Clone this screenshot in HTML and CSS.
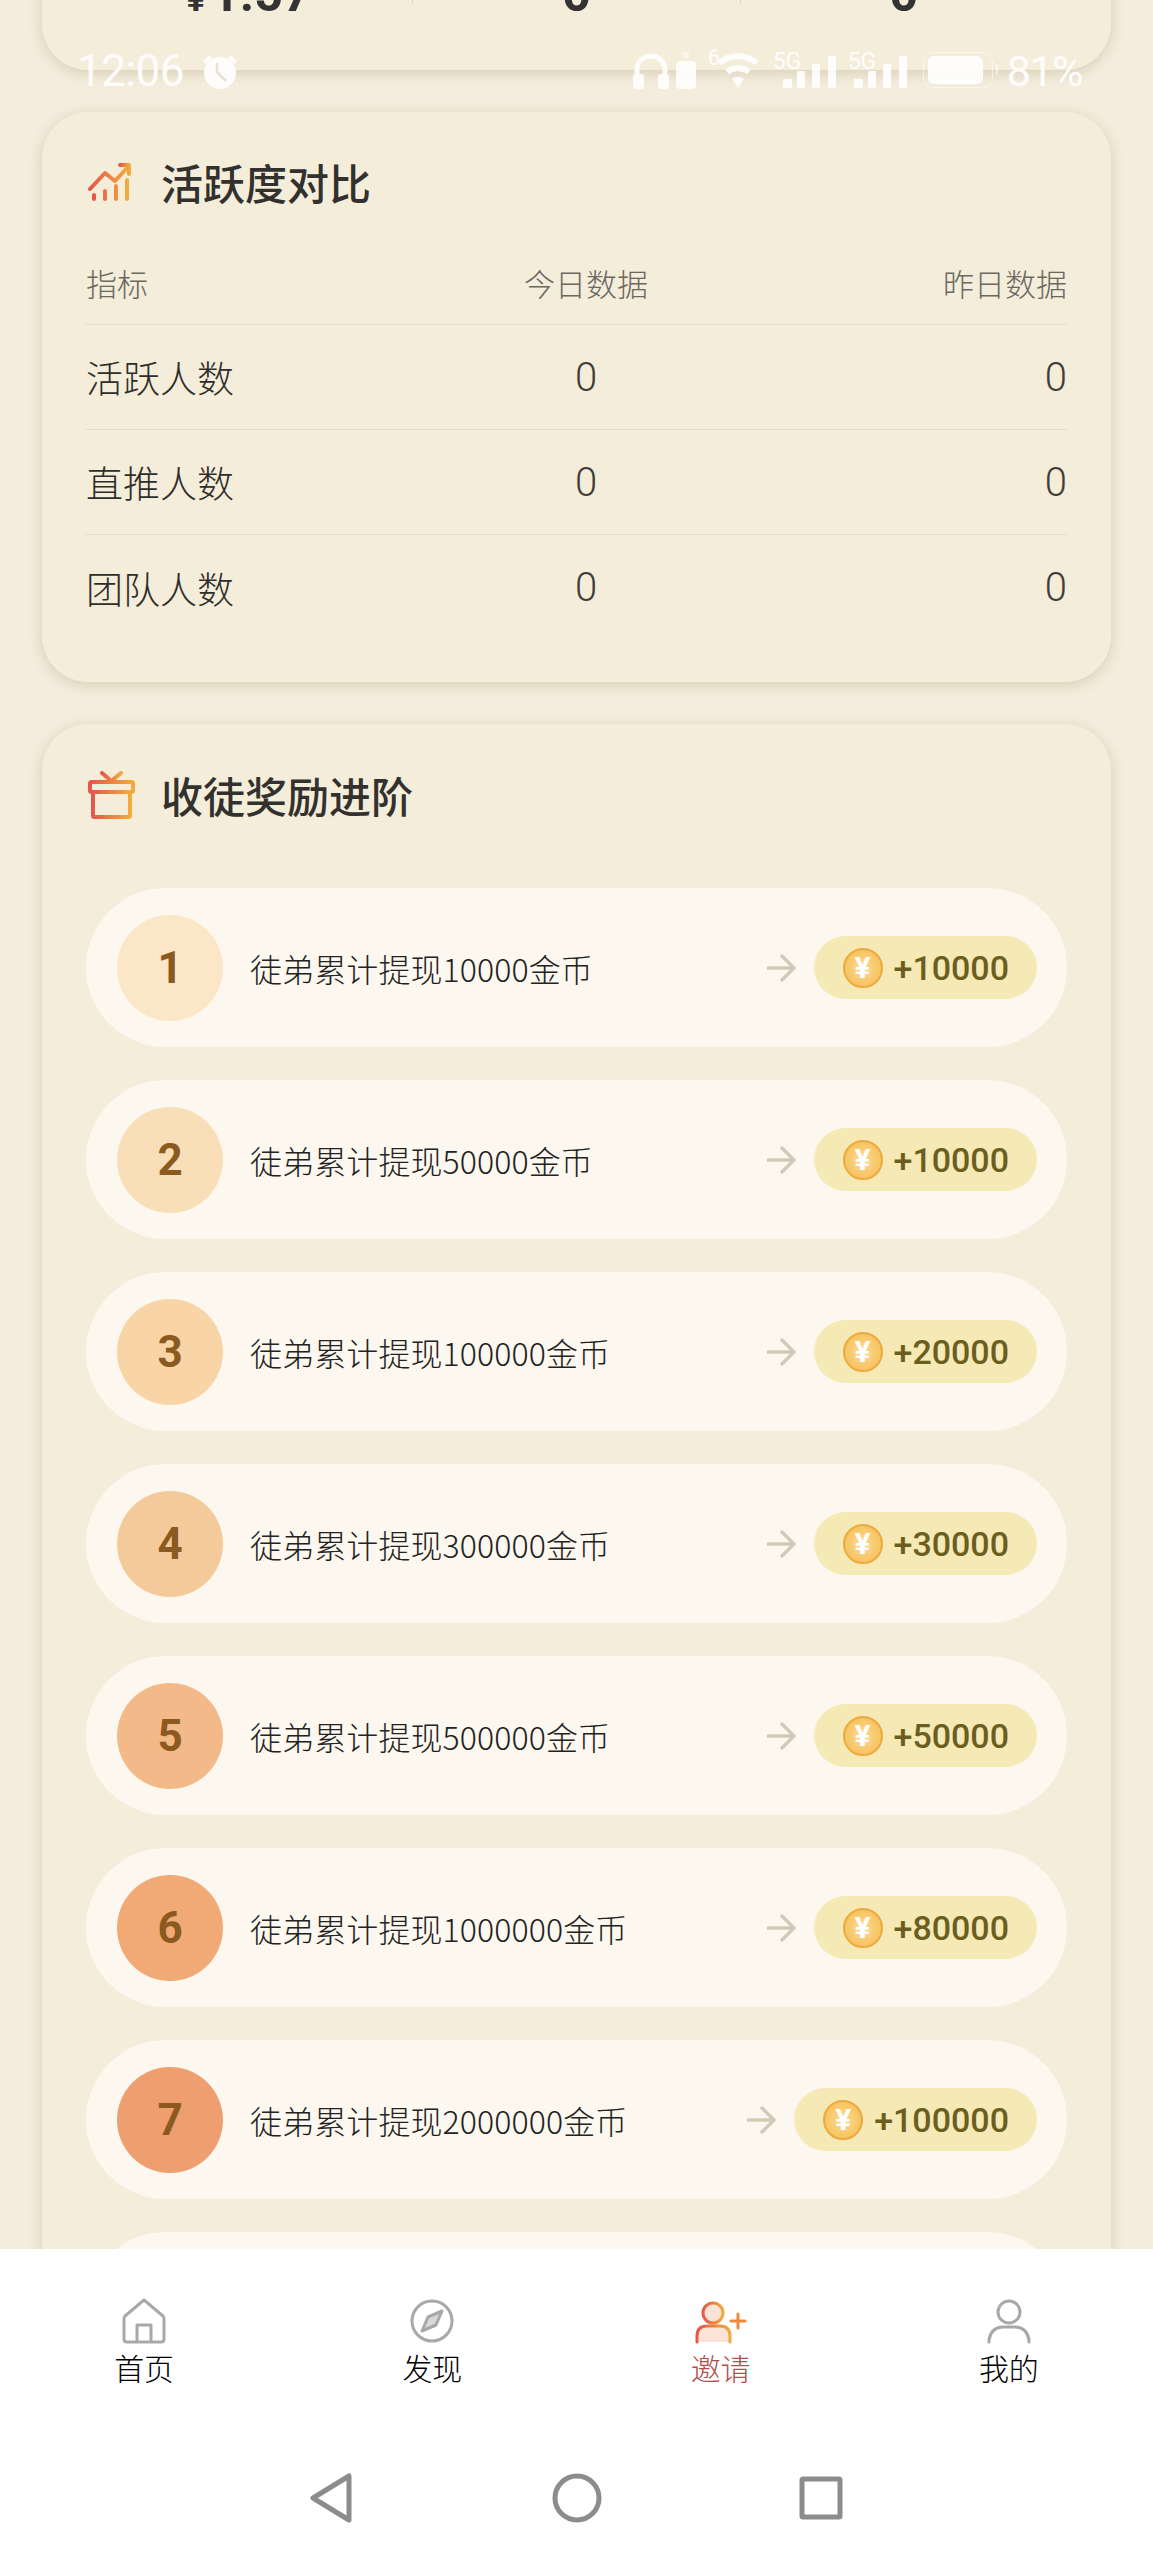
FILE: index.html
```html
<!DOCTYPE html>
<html lang="zh-CN">
<head>
    <meta charset="UTF-8">
    <meta name="viewport" content="width=device-width, initial-scale=1.0">
    <title>邀请</title>
    <link rel="stylesheet" href="styles.css">
</head>
<body>

    <svg class="defs" width="0" height="0">
        <defs>
            <linearGradient id="warm" x1="0" y1="0" x2="1" y2="0">
                <stop offset="0" stop-color="#e6574a"/>
                <stop offset="1" stop-color="#f2ab3c"/>
            </linearGradient>
            <symbol id="bars" viewBox="0 0 53 32">
                <rect x="0" y="23" width="9" height="9" rx="1"/>
                <rect x="14" y="15" width="8" height="17" rx="1"/>
                <rect x="29" y="8" width="8" height="24" rx="1"/>
                <rect x="45" y="0" width="8" height="32" rx="1"/>
            </symbol>
        </defs>
    </svg>

    <div class="screen">

        <!-- status bar lies over the scrolled page -->
        <div class="status">
            <span class="clock">12:06</span>
            <svg class="alarm" width="40" height="36" viewBox="0 0 40 36">
                <path d="M3 8 L9 2 L12 5 L6 11 Z M37 8 L31 2 L28 5 L34 11 Z" fill="#fff"/>
                <circle cx="20" cy="20" r="16" fill="#fff"/>
                <path d="M17 10 V19 L26 28" fill="none" stroke="#e9e2d2" stroke-width="2.5"/>
            </svg>
            <span class="status-right">
                <svg class="phones" width="36" height="36" viewBox="0 0 36 36">
                    <path d="M4 30 V17 A14 14 0 0 1 32 17 V30" fill="none" stroke="#fff" stroke-width="5"/>
                    <rect x="0" y="21" width="11" height="15" rx="3" fill="#fff"/>
                    <rect x="25" y="21" width="11" height="15" rx="3" fill="#fff"/>
                </svg>
                <svg class="case" width="20" height="37" viewBox="0 0 20 37">
                    <rect x="7" y="0" width="6" height="6" rx="1" fill="#fff" opacity="0.5"/>
                    <rect x="0" y="9" width="20" height="28" rx="4" fill="#fff"/>
                </svg>
                <span class="wifi">
                    <span class="wifi-num">6</span>
                    <svg width="44" height="35" viewBox="0 0 44 35">
                        <path d="M3 10 A30 30 0 0 1 41 10 M11 19 A18 18 0 0 1 33 19" fill="none" stroke="#fff" stroke-width="6"/>
                        <path d="M16 26 A9 9 0 0 1 28 26 L22 35 Z" fill="#fff"/>
                    </svg>
                </span>
                <span class="signal">
                    <span class="signal-tag">5G</span>
                    <svg class="signal-bars"><use href="#bars"/></svg>
                </span>
                <span class="signal signal-two">
                    <span class="signal-tag">5G</span>
                    <svg class="signal-bars"><use href="#bars"/></svg>
                </span>
                <span class="battery"><span class="battery-fill"></span></span>
                <span class="percent">81%</span>
            </span>
        </div>

        <div class="scroll">

            <div class="card card-stats">
                <div class="stats">
                    <div class="stat"><span class="stat-unit">¥</span>1.57</div>
                    <div class="stat-sep"></div>
                    <div class="stat">0</div>
                    <div class="stat-sep"></div>
                    <div class="stat">0</div>
                </div>
            </div>

            <div class="card card-compare">
                <div class="card-title">
                    <span class="title-icon">
                        <svg class="icon-trend" width="43" height="38" viewBox="0 0 43 38" fill="none" stroke="url(#warm)" stroke-width="4" stroke-linecap="round" stroke-linejoin="round">
                            <path d="M2 26 L17 10 L27 18 L40 4" />
                            <path d="M32 2 H41 V11"/>
                            <path d="M6 32 V36 M17 28 V36 M28 23 V36 M39 17 V36"/>
                        </svg>
                    </span>
                    <h2>活跃度对比</h2>
                </div>
                <div class="cmp-head">
                    <span>指标</span>
                    <span class="cmp-mid">今日数据</span>
                    <span class="cmp-end">昨日数据</span>
                </div>
                <div class="cmp-row">
                    <span class="cmp-name">活跃人数</span>
                    <span class="cmp-mid cmp-num">0</span>
                    <span class="cmp-end cmp-num">0</span>
                </div>
                <div class="cmp-row">
                    <span class="cmp-name">直推人数</span>
                    <span class="cmp-mid cmp-num">0</span>
                    <span class="cmp-end cmp-num">0</span>
                </div>
                <div class="cmp-row cmp-last">
                    <span class="cmp-name">团队人数</span>
                    <span class="cmp-mid cmp-num">0</span>
                    <span class="cmp-end cmp-num">0</span>
                </div>
            </div>

            <div class="card card-reward">
                <div class="card-title card-title-reward">
                    <span class="title-icon">
                        <svg width="49" height="48" viewBox="0 0 49 48" fill="none" stroke="url(#warm)" stroke-width="4" stroke-linejoin="round" stroke-linecap="round">
                            <path d="M16 2 L25.5 10 L35 2"/>
                            <rect x="4" y="11" width="43" height="10" rx="1.5"/>
                            <rect x="7" y="21" width="37" height="25" rx="1.5"/>
                            <path d="M25.5 21 V46"/>
                        </svg>
                    </span>
                    <h2>收徒奖励进阶</h2>
                </div>

                <div class="step">
                    <span class="step-num step-1">1</span>
                    <span class="step-text">徒弟累计提现10000金币</span>
                    <svg class="arrow" width="29" height="28" viewBox="0 0 29 28"><path d="M1 14 H27 M15 2 L27 14 L15 26" /></svg>
                    <span class="prize"><span class="coin">¥</span>+10000</span>
                </div>
                <div class="step">
                    <span class="step-num step-2">2</span>
                    <span class="step-text">徒弟累计提现50000金币</span>
                    <svg class="arrow" width="29" height="28" viewBox="0 0 29 28"><path d="M1 14 H27 M15 2 L27 14 L15 26" /></svg>
                    <span class="prize"><span class="coin">¥</span>+10000</span>
                </div>
                <div class="step">
                    <span class="step-num step-3">3</span>
                    <span class="step-text">徒弟累计提现100000金币</span>
                    <svg class="arrow" width="29" height="28" viewBox="0 0 29 28"><path d="M1 14 H27 M15 2 L27 14 L15 26" /></svg>
                    <span class="prize"><span class="coin">¥</span>+20000</span>
                </div>
                <div class="step">
                    <span class="step-num step-4">4</span>
                    <span class="step-text">徒弟累计提现300000金币</span>
                    <svg class="arrow" width="29" height="28" viewBox="0 0 29 28"><path d="M1 14 H27 M15 2 L27 14 L15 26" /></svg>
                    <span class="prize"><span class="coin">¥</span>+30000</span>
                </div>
                <div class="step">
                    <span class="step-num step-5">5</span>
                    <span class="step-text">徒弟累计提现500000金币</span>
                    <svg class="arrow" width="29" height="28" viewBox="0 0 29 28"><path d="M1 14 H27 M15 2 L27 14 L15 26" /></svg>
                    <span class="prize"><span class="coin">¥</span>+50000</span>
                </div>
                <div class="step">
                    <span class="step-num step-6">6</span>
                    <span class="step-text">徒弟累计提现1000000金币</span>
                    <svg class="arrow" width="29" height="28" viewBox="0 0 29 28"><path d="M1 14 H27 M15 2 L27 14 L15 26" /></svg>
                    <span class="prize"><span class="coin">¥</span>+80000</span>
                </div>
                <div class="step">
                    <span class="step-num step-7">7</span>
                    <span class="step-text">徒弟累计提现2000000金币</span>
                    <svg class="arrow" width="29" height="28" viewBox="0 0 29 28"><path d="M1 14 H27 M15 2 L27 14 L15 26" /></svg>
                    <span class="prize"><span class="coin">¥</span>+100000</span>
                </div>
                <!-- next step is cut off by the tab bar -->
                <div class="step"></div>
            </div>

        </div>

        <div class="tabbar">
            <div class="tab">
                <svg class="tab-icon" width="44" height="46" viewBox="0 0 44 46" fill="none" stroke="#a8a8a8" stroke-width="3" stroke-linejoin="round">
                    <path d="M22 2 L41 18 Q42 19 42 21 V41 Q42 44 39 44 H5 Q2 44 2 41 V21 Q2 19 3 18 Z"/>
                    <path d="M15 44 V27 H29 V44"/>
                </svg>
                <span>首页</span>
            </div>
            <div class="tab">
                <svg class="tab-icon" width="44" height="46" viewBox="0 0 44 46" fill="none" stroke="#a8a8a8" stroke-width="3" stroke-linejoin="round">
                    <circle cx="22" cy="23" r="20"/>
                    <path d="M32 13 L26 27 L12 33 L18 19 Z" fill="#d8d8d8"/>
                </svg>
                <span>发现</span>
            </div>
            <div class="tab tab-active">
                <svg class="tab-icon" width="52" height="46" viewBox="0 0 52 46" fill="none" stroke="url(#warm)" stroke-width="3" stroke-linecap="round">
                    <circle cx="18" cy="15" r="10" fill="#fbe3d8"/>
                    <path d="M2 44 V38 Q2 28 12 28 H25 Q35 28 35 38 V44" fill="#fbe3d8"/>
                    <path d="M36 23 H50 M43 16 V30" stroke="#ee8a3e"/>
                </svg>
                <span>邀请</span>
            </div>
            <div class="tab">
                <svg class="tab-icon" width="44" height="46" viewBox="0 0 44 46" fill="none" stroke="#a8a8a8" stroke-width="3" stroke-linecap="round">
                    <circle cx="22" cy="14" r="11"/>
                    <path d="M2 44 V42 Q4 30 15 29 H29 Q40 30 42 42 V44"/>
                </svg>
                <span>我的</span>
            </div>
        </div>

        <div class="navbar">
            <svg width="42" height="50" viewBox="0 0 42 50" fill="none" stroke="#8c8c8c" stroke-width="5" stroke-linejoin="round">
                <path d="M39 3 V47 L3 25 Z"/>
            </svg>
            <svg width="50" height="50" viewBox="0 0 50 50" fill="none" stroke="#8c8c8c" stroke-width="5">
                <circle cx="25" cy="25" r="22"/>
            </svg>
            <svg class="nav-square" width="44" height="44" viewBox="0 0 44 44" fill="none" stroke="#8c8c8c" stroke-width="5" stroke-linejoin="round">
                <rect x="3" y="3" width="38" height="38" rx="1"/>
            </svg>
        </div>

    </div>

</body>
</html>
```

FILE: styles.css
```css
body{
    margin: 0;
    background-color: #f4eddd;
    font-family: "Noto Sans CJK SC", "Noto Sans", sans-serif;
    color: #3a3a3a;
}

.defs{
    position: absolute;
}

.screen{
    position: relative;
    width: 1153px;
    height: 2560px;
    overflow: hidden;
    display: flex;
    flex-direction: column;
}

/* status bar */
.status{
    position: absolute;
    top: 47px;
    left: 77px;
    right: 71px;
    height: 42px;
    display: flex;
    align-items: flex-end;
    color: #fff;
    opacity: 0.92;
    z-index: 2;
    font-family: Roboto, sans-serif;
}

.clock{
    font-size: 44px;
    font-weight: 400;
    line-height: 36px;
    letter-spacing: -0.5px;
}

.alarm{
    margin-left: 16px;
}

.status-right{
    margin-left: auto;
    display: flex;
    align-items: flex-end;
}

.case{
    margin-left: 7px;
}

.wifi{
    position: relative;
    margin-left: 20px;
    margin-bottom: 1px;
}

.wifi svg{
    display: block;
}

.wifi-num{
    position: absolute;
    top: -6px;
    left: -8px;
    font-size: 22px;
    line-height: 22px;
}

.signal{
    position: relative;
    width: 63px;
    height: 42px;
    margin-left: 13px;
    display: flex;
    justify-content: flex-end;
    align-items: flex-end;
}

.signal-two{
    margin-left: 12px;
    width: 59px;
}

.signal-tag{
    position: absolute;
    top: 4px;
    left: 0;
    font-size: 23px;
    line-height: 22px;
}

.signal-bars{
    width: 53px;
    height: 32px;
    margin-bottom: 1px;
    fill: #fff;
}

.battery{
    position: relative;
    box-sizing: border-box;
    margin-left: 16px;
    margin-bottom: 1px;
    width: 70px;
    height: 36px;
    padding: 3px 9px 3px 4px;
    border: 1px solid rgba(255, 255, 255, 0.6);
    border-radius: 10px;
}

.battery::after{
    content: "";
    position: absolute;
    top: 11px;
    right: -6px;
    width: 2px;
    height: 10px;
    background-color: rgba(255, 255, 255, 0.6);
}

.battery-fill{
    display: block;
    height: 100%;
    background-color: #fff;
    border-radius: 6px;
}

.percent{
    margin-left: 14px;
    font-size: 43px;
    font-weight: 400;
    line-height: 36px;
    letter-spacing: -1.5px;
}

/* page under the status bar */
.scroll{
    flex: 1;
    min-height: 0;
    overflow: hidden;
    padding: 0 42px;
}

.card{
    background-color: #f4edda;
    border-radius: 46px;
    box-shadow: 0 3px 14px rgba(130, 105, 60, 0.24);
    padding: 0 44px;
    margin-bottom: 42px;
}

.card-stats{
    margin-top: -64px;
    padding-top: 28px;
    padding-bottom: 41px;
}

.stats{
    display: flex;
}

.stat{
    flex: 1;
    text-align: center;
    font-family: Roboto, sans-serif;
    font-size: 50px;
    font-weight: 700;
    line-height: 60px;
    color: #333;
}

.stat-unit{
    font-size: 34px;
    margin-right: 6px;
}

.stat-sep{
    width: 1px;
    height: 40px;
    background-color: #ddd5c2;
}

.card-compare{
    padding-top: 45px;
    padding-bottom: 42px;
}

.card-reward{
    padding-top: 47px;
    margin-bottom: 0;
    padding-bottom: 40px;
}

.card-title{
    display: flex;
    align-items: center;
    height: 50px;
}

.card-title-reward{
    height: 48px;
    margin-bottom: 69px;
}

.card-title h2{
    margin: 0;
    font-size: 42px;
    font-weight: 500;
    line-height: 50px;
    color: #33312e;
}

.title-icon{
    width: 75px;
    display: flex;
}

.icon-trend{
    margin-left: 2px;
}

/* compare table */
.cmp-head, .cmp-row{
    display: grid;
    grid-template-columns: 400px 200px 1fr;
    align-items: center;
    border-bottom: 1px solid #e4dccb;
    box-sizing: border-box;
}

.cmp-head{
    margin-top: 33px;
    height: 85px;
    font-size: 31px;
    font-weight: 300;
    color: #6a6862;
}

.cmp-row{
    height: 105px;
    font-size: 37px;
    font-weight: 300;
    color: #2f2d2a;
}

.cmp-num{
    font-family: Roboto, sans-serif;
    font-size: 40px;
    color: #3f3d39;
}

.cmp-last{
    border-bottom: 0;
}

.cmp-mid{
    text-align: center;
}

.cmp-end{
    text-align: right;
}

/* reward steps */
.step{
    display: flex;
    align-items: center;
    height: 159px;
    box-sizing: border-box;
    padding: 0 30px 0 31px;
    margin-bottom: 33px;
    background-color: #fdf8ef;
    border-radius: 80px;
}

.step-num{
    width: 106px;
    height: 106px;
    flex-shrink: 0;
    border-radius: 50%;
    display: flex;
    align-items: center;
    justify-content: center;
    font-family: Roboto, sans-serif;
    font-size: 44px;
    font-weight: 700;
    color: #8a5a1e;
}

.step-1{ background-color: #fbe7c8; }
.step-2{ background-color: #f9dfb8; }
.step-3{ background-color: #f8d4a6; }
.step-4{ background-color: #f5ca9a; }
.step-5{ background-color: #f4b988; }
.step-6{ background-color: #f1a975; }
.step-7{ background-color: #ef9f6f; }

.step-text{
    flex: 1;
    margin-left: 27px;
    font-size: 32px;
    font-weight: 300;
    color: #222;
    white-space: nowrap;
    letter-spacing: 0.1px;
}

.arrow{
    margin-right: 18px;
    fill: none;
    stroke: #d2cab8;
    stroke-width: 3.5;
    stroke-linecap: round;
    stroke-linejoin: round;
}

.prize{
    display: flex;
    align-items: center;
    height: 63px;
    padding: 0 28px 0 29px;
    background-color: #f5e9b6;
    border-radius: 32px;
    font-family: Roboto, sans-serif;
    font-size: 34px;
    font-weight: 500;
    color: #6b5e1f;
}

.coin{
    box-sizing: border-box;
    width: 40px;
    height: 40px;
    margin-right: 11px;
    border: 2px solid #eea93f;
    border-radius: 50%;
    background: radial-gradient(circle at 50% 50%, #fbdc9a 0%, #f8c96c 55%, #f5bb4e 100%);
    color: #fff;
    font-size: 30px;
    font-weight: 700;
    line-height: 36px;
    text-align: center;
}

/* bottom bars */
.tabbar{
    display: flex;
    background-color: #fff;
    padding-top: 49px;
    height: 133px;
    position: relative;
    z-index: 1;
}

.tab{
    flex: 1;
    display: flex;
    flex-direction: column;
    align-items: center;
    font-size: 30px;
    font-weight: 300;
    line-height: 38px;
    color: #000;
}

.tab-icon{
    margin-bottom: 4px;
}

.tab-active{
    color: #b0504e;
}

.navbar{
    box-sizing: border-box;
    background-color: #fff;
    height: 129px;
    padding-top: 4px;
    display: flex;
    justify-content: center;
    align-items: center;
    gap: 200px;
    position: relative;
    z-index: 1;
}

.nav-square{
    margin-left: -3px;
}
```
